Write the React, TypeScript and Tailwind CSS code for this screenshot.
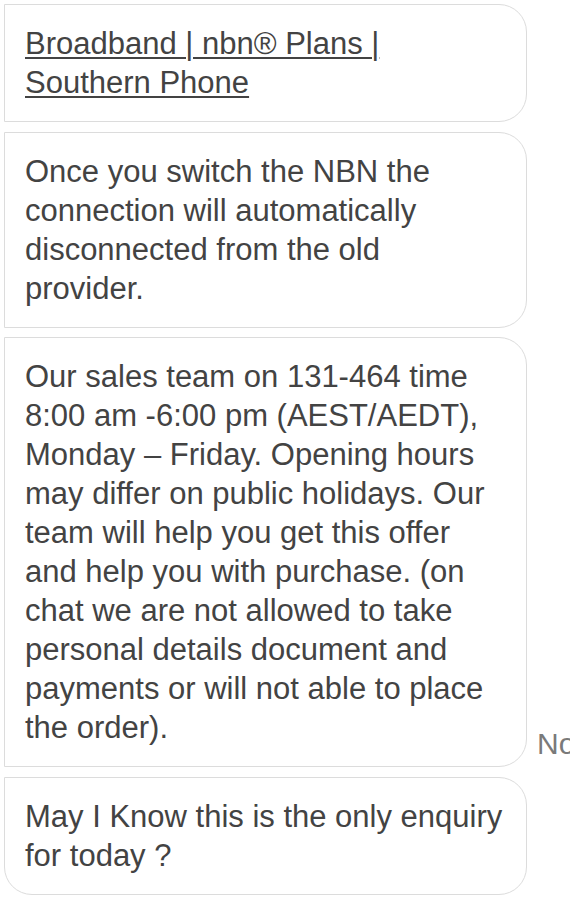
import React from "react";

function Bubble({ children, last }: { children: React.ReactNode; last?: boolean }) {
  return (
    <div
      className={
        "w-[523px] shrink-0 border border-[#dcdcdc] bg-white pl-[20px] pr-[20px] py-[19px] rounded-tr-[28px] rounded-br-[28px] " +
        (last ? "rounded-bl-[28px]" : "")
      }
    >
      {children}
    </div>
  );
}

export default function App() {
  return (
    <div
      className="w-[570px] h-[900px] overflow-hidden bg-white text-[#434343] text-[31px] leading-[39px]"
      style={{ fontFamily: '"Liberation Sans", Arial, sans-serif' }}
    >
      <div className="flex flex-col gap-[9.5px] pt-[4px] pl-[4px]">
        <Bubble>
          <a className="underline underline-offset-[3px] decoration-[1.5px]">
            Broadband | nbn® Plans | Southern Phone
          </a>
        </Bubble>
        <Bubble>
          Once you switch the NBN the connection will automatically disconnected from the old provider.
        </Bubble>
        <div className="flex items-end">
          <Bubble>
            Our sales team on 131-464 time 8:00 am -6:00 pm (AEST/AEDT), Monday – Friday. Opening hours may differ
            on public holidays. Our team will help you get this offer and help you with purchase. (on chat we are
            not allowed to take personal details document and payments or will not able to place the order).
          </Bubble>
          <div className="ml-[10px] mb-[4px] whitespace-nowrap text-[#7a7a7a] text-[30px] leading-[39px]">Now</div>
        </div>
        <Bubble last>May I Know this is the only enquiry for today ?</Bubble>
      </div>
    </div>
  );
}
